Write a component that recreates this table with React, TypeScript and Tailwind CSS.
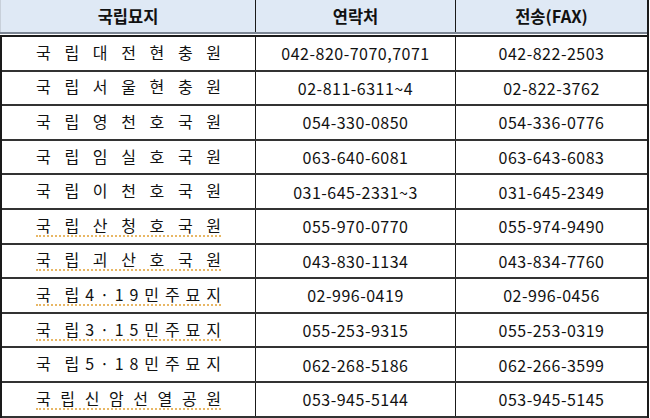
import React from "react";

type Row = { name: string[]; tel: string; fax: string; mark?: boolean };

const ROWS: Row[] = [
  { name: ["국", "립", "대", "전", "현", "충", "원"], tel: "042-820-7070,7071", fax: "042-822-2503" },
  { name: ["국", "립", "서", "울", "현", "충", "원"], tel: "02-811-6311~4", fax: "02-822-3762" },
  { name: ["국", "립", "영", "천", "호", "국", "원"], tel: "054-330-0850", fax: "054-336-0776" },
  { name: ["국", "립", "임", "실", "호", "국", "원"], tel: "063-640-6081", fax: "063-643-6083" },
  { name: ["국", "립", "이", "천", "호", "국", "원"], tel: "031-645-2331~3", fax: "031-645-2349" },
  { name: ["국", "립", "산", "청", "호", "국", "원"], tel: "055-970-0770", fax: "055-974-9490", mark: true },
  { name: ["국", "립", "괴", "산", "호", "국", "원"], tel: "043-830-1134", fax: "043-834-7760", mark: true },
  { name: ["국", " ", "립", "4", "·", "1", "9", "민", "주", "묘", "지"], tel: "02-996-0419", fax: "02-996-0456", mark: true },
  { name: ["국", " ", "립", "3", "·", "1", "5", "민", "주", "묘", "지"], tel: "055-253-9315", fax: "055-253-0319", mark: true },
  { name: ["국", " ", "립", "5", "·", "1", "8", "민", "주", "묘", "지"], tel: "062-268-5186", fax: "062-266-3599" },
  { name: ["국", "립", "신", "암", "선", "열", "공", "원"], tel: "053-945-5144", fax: "053-945-5145", mark: true },
];

const font = { fontFamily: '"Malgun Gothic", "Noto Sans CJK KR", "Noto Sans", sans-serif' };

export default function App() {
  return (
    <div className="w-[650px] h-[418px] bg-white overflow-hidden text-[#111]" style={font}>
      <div className="w-[649px] border-r-2 border-[#1a1a1a]">
        {/* 헤더 */}
        <div className="grid grid-cols-[256px_200px_1fr] h-[34px] bg-[#dfe9f5] border-b-2 border-[#7b8593] text-[16.5px] font-bold">
          <div className="flex items-center justify-center border-r border-[#1a1a1a] border-l border-l-[#c8d0da]">국립묘지</div>
          <div className="flex items-center justify-center border-r border-[#1a1a1a]">연락처</div>
          <div className="flex items-center justify-center">전송(FAX)</div>
        </div>
        <div className="h-px bg-white" />
        <div className="border-t-2 border-l-2 border-[#1a1a1a] text-[16px]">
          {ROWS.map((r, i) => (
            <div
              key={i}
              className="grid grid-cols-[254px_200px_1fr] h-[34.6px] border-b-2 border-[#333]"
            >
              <div className="flex items-center justify-center border-r border-[#1a1a1a]">
                <div
                  className={`flex justify-between w-[185px] leading-[19px] ${
                    r.mark ? "border-b-2 border-dotted border-[#e8b765]" : "border-b-2 border-transparent"
                  }`}
                >
                  {r.name.map((c, j) => (
                    <span key={j} className={c === " " ? "w-[2px]" : ""}>
                      {c === " " ? "" : c}
                    </span>
                  ))}
                </div>
              </div>
              <div className="flex items-center justify-center border-r border-[#1a1a1a] tracking-[0.5px]">{r.tel}</div>
              <div className="flex items-center justify-center tracking-[0.5px]">{r.fax}</div>
            </div>
          ))}
        </div>
      </div>
    </div>
  );
}
